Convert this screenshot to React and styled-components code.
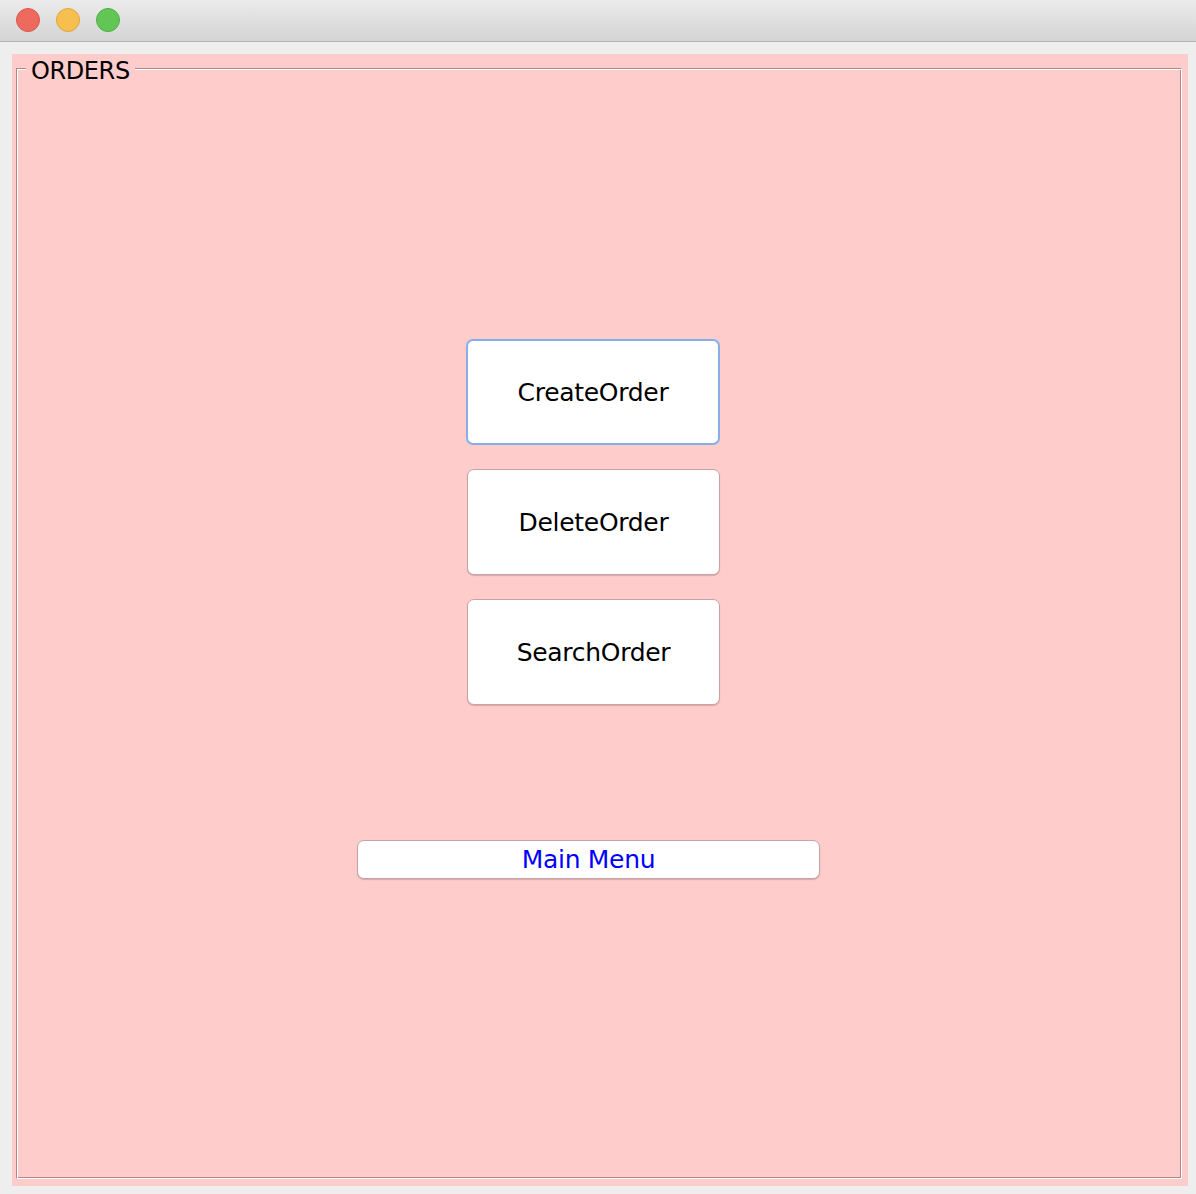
import React from 'react'
import styled, { createGlobalStyle } from 'styled-components'

const GlobalStyle = createGlobalStyle`
  html, body {
    margin: 0;
    padding: 0;
    background: #eeeeee;
    font-family: "DejaVu Sans", "Liberation Sans", sans-serif;
  }
`

const Window = styled.div`
  width: 1196px;
  height: 1194px;
  background: #eeeeee;
  display: flex;
  flex-direction: column;
  overflow: hidden;
`

const TitleBar = styled.div`
  flex-shrink: 0;
  background: linear-gradient(#ebebeb, #d4d4d4);
  border-bottom: 1px solid #b3b3b3;
  display: flex;
  align-items: center;
  gap: 16px;
  padding-left: 16px;
  box-sizing: border-box;
  height: 42px;
`

const Light = styled.span`
  width: 24px;
  height: 24px;
  border-radius: 50%;
  box-sizing: border-box;
  background: ${p => p.color};
  border: 1px solid ${p => p.edge};
  margin-top: -2px;
`

const Content = styled.div`
  flex: 1;
  padding: 12px 8px 8px 12px;
  display: flex;
`

const Panel = styled.div`
  flex: 1;
  background: #ffcccc;
  padding: 14px 6px 7px 4px;
  display: flex;
`

const Etched = styled.div`
  position: relative;
  flex: 1;
  border-style: solid;
  border-width: 1px;
  border-color: #b08686 #ffffff #ffffff #b08686;
  box-shadow: inset 1px 1px 0 #ffffff, inset -1px -1px 0 #b08686;
  display: flex;
  flex-direction: column;
  align-items: flex-start;
  padding-top: 270px;
`

const Legend = styled.span`
  position: absolute;
  left: 9px;
  top: -13px;
  padding: 0 5px 0 5px;
  background: #ffcccc;
  font-size: 24px;
  line-height: 30px;
  color: #000;
  letter-spacing: -0.4px;
`

const ActionButton = styled.button`
  margin-left: ${p => p.indent}px;
  margin-bottom: ${p => p.gap}px;
  width: ${p => p.w}px;
  height: ${p => p.h}px;
  box-sizing: border-box;
  background: #ffffff;
  border: ${p => (p.focused ? '2px solid #86aee9' : '1px solid #c9a3a3')};
  border-radius: 7px;
  box-shadow: ${p => (p.focused ? 'none' : '0 1px 1px rgba(150, 100, 100, 0.35)')};
  font-family: "DejaVu Sans", "Liberation Sans", sans-serif;
  font-size: 25px;
  color: ${p => p.color || '#000'};
  letter-spacing: -0.3px;
  padding: 0;
  cursor: pointer;
`

export default function App() {
  return (
    <Window>
      <GlobalStyle />
      <TitleBar>
        <Light color="#ee6a5f" edge="#d85a4f" />
        <Light color="#f6bf50" edge="#dea63f" />
        <Light color="#62c655" edge="#52ad45" />
      </TitleBar>
      <Content>
        <Panel>
          <Etched>
            <Legend>ORDERS</Legend>
            <ActionButton focused indent={449} gap={24} w={254} h={106}>CreateOrder</ActionButton>
            <ActionButton indent={450} gap={24} w={253} h={106}>DeleteOrder</ActionButton>
            <ActionButton indent={450} gap={135} w={253} h={106}>SearchOrder</ActionButton>
            <ActionButton indent={340} gap={0} w={463} h={39} color="#0000ff">Main Menu</ActionButton>
          </Etched>
        </Panel>
      </Content>
    </Window>
  )
}
